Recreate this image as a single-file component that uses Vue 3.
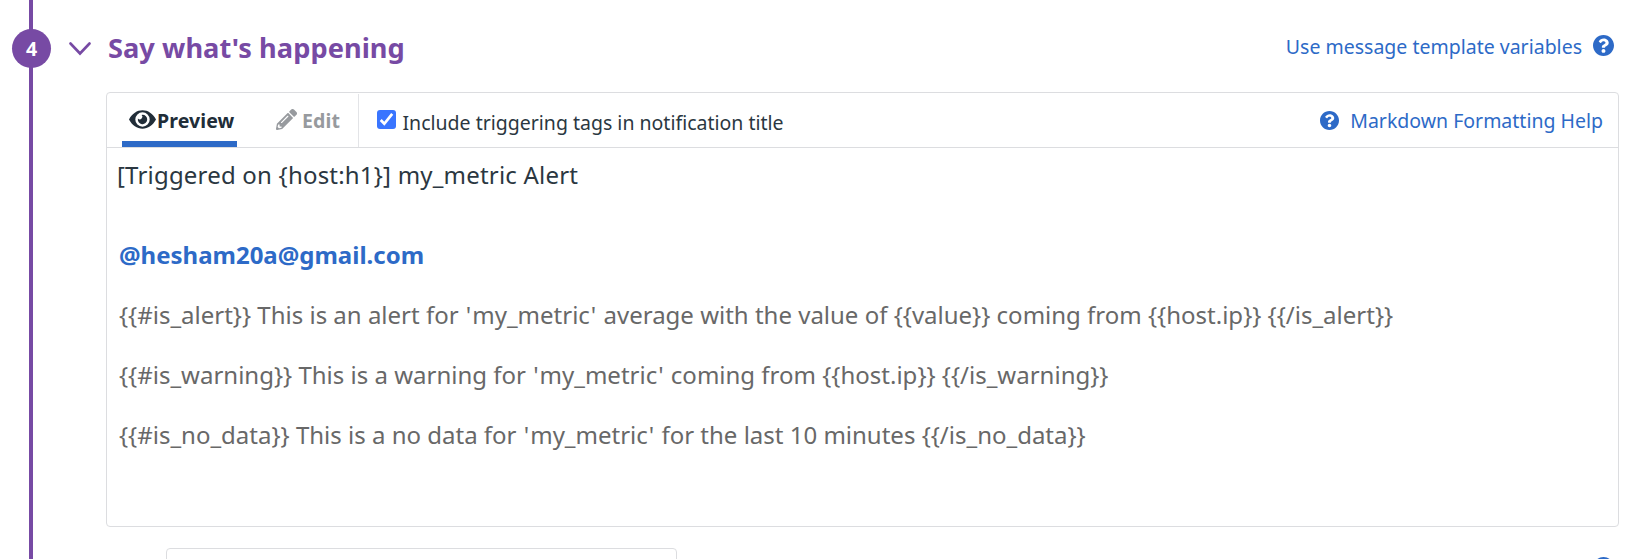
<script setup>
import { ref } from 'vue'

const includeTags = ref(true)
const messages = [
  "{{#is_alert}} This is an alert for 'my_metric' average with the value of {{value}} coming from {{host.ip}} {{/is_alert}}",
  "{{#is_warning}} This is a warning for 'my_metric' coming from {{host.ip}} {{/is_warning}}",
  "{{#is_no_data}} This is a no data for 'my_metric' for the last 10 minutes {{/is_no_data}}",
].map((text) => text.split(/(')/))
const helpPath =
  'M504 256c0 137-111 248-248 248S8 393 8 256 119 8 256 8s248 111 248 248zM262.700 90c-54.500 0-89.300 23-116.500 63.800-3.500 5.300-2.400 12.400 2.700 16.300l34.700 26.300c5.200 3.900 12.600 3 16.700-2.100 17.900-22.700 30.100-35.800 57.300-35.800 20.400 0 45.700 13.100 45.700 33 0 15-12.400 22.700-32.500 34C247.100 238.500 216 254.900 216 296v4c0 6.600 5.400 12 12 12h56c6.600 0 12-5.400 12-12v-1.300c0-28.500 83.200-29.600 83.200-106.700 0-58-60.200-102-116.500-102zM256 338c-25.400 0-46 20.600-46 46s20.600 46 46 46 46-20.600 46-46-20.600-46-46-46z'
</script>

<template>
  <main class="step">
    <aside class="rail"><span class="badge">4</span></aside>
    <section class="content">
      <header class="heading">
        <svg class="chevron" viewBox="0 0 22 14"><path d="M1.500 1.500 11 11.500 20.500 1.500" /></svg>
        <h2><span>Say what's happening</span></h2>
        <a class="vars"><span>Use message template variables</span>
          <svg class="help" viewBox="8 8 496 496"><path :d="helpPath" /></svg>
        </a>
      </header>
      <div class="panel">
        <nav class="toolbar">
          <div class="tab active">
            <svg class="eye" viewBox="0 0 27 19">
              <path fill-rule="evenodd" d="M0 9.500C3.200 3.600 8 .3 13.500.3S23.800 3.600 27 9.500c-3.200 5.900-8 9.200-13.500 9.200S3.200 15.400 0 9.500ZM13.500 2.300a7.200 7.200 0 1 0 0 14.400 7.200 7.200 0 0 0 0-14.400Z" />
              <path d="M13.500 4.800a4.700 4.700 0 1 1-4.600 3.800 2.600 2.600 0 0 0 3.700-3.700Z" />
            </svg><span>Preview</span>
          </div>
          <div class="tab edit">
            <svg class="pencil" viewBox="0 0 512 512"><path d="M498 142l-46 46c-5 5-13 5-17 0L324 77c-5-5-5-12 0-17l46-46c19-19 49-19 68 0l60 60c19 19 19 49 0 68zM284 100L22 362 0 484c-3 16 12 30 28 28l122-22 262-262c5-5 5-13 0-17L301 100c-4-5-12-5-17 0zM124 340c-5-6-5-14 0-20l154-154c6-5 14-5 20 0s5 14 0 20L144 340c-6 5-14 5-20 0zM88 424h48v36l-64 12-32-32 12-64h36v48z" /></svg>
            <span>Edit</span>
          </div>
          <label class="include">
            <input v-model="includeTags" type="checkbox">
            <span class="check"><svg v-if="includeTags" viewBox="0 0 19 19"><path d="M3.700 10 7.300 13.800 15.200 3.800" /></svg></span>
            <span class="include-text">Include triggering tags in notification title</span>
          </label>
          <a class="markdown">
            <svg viewBox="8 8 496 496"><path :d="helpPath" /></svg><span>Markdown Formatting Help</span>
          </a>
        </nav>
        <div class="title"><span>[Triggered on {host:h1}] my_metric Alert</span></div>
        <div class="body">
          <p class="mention"><span>@hesham20a@gmail.com</span></p>
          <p v-for="(parts, i) in messages" :key="i"><span v-for="(part, j) in parts" :key="j" :class="{ quote: j % 2 }">{{ part }}</span></p>
        </div>
      </div>
      <div class="next">
        <div class="field"></div>
        <svg class="help" viewBox="8 8 496 496"><path :d="helpPath" /></svg>
      </div>
    </section>
  </main>
</template>

<style>
html, body { margin: 0; background: #fff; overflow: hidden; }
</style>

<style scoped>
* { box-sizing: border-box; }
.step { display: flex; width: 1629px; height: 559px; overflow: hidden; font-family: "Noto Sans", sans-serif; font-size: 19.5px; color: #2b3741; }
.rail { width: 62px; flex: none; padding: 29px 0 0 12px; background: linear-gradient(#774aa4, #774aa4) 29px 0 / 4px 100% no-repeat; }
.badge { display: block; width: 39px; height: 39px; border-radius: 50%; background: #774aa4; color: #fff; font-weight: 700; font-size: 19.5px; line-height: 39px; text-align: center; }
.content { flex: 1; min-width: 0; }
.heading { display: flex; align-items: flex-start; height: 92px; padding: 0 15px 0 7px; }
.chevron { width: 22px; height: 14px; margin-top: 42px; fill: none; stroke: #774aa4; stroke-width: 2.6; stroke-linecap: round; }
h2 { margin: 28px 0 0 17px; font-size: 27.2px; line-height: 40px; font-weight: 700; color: #774aa4; white-space: nowrap; letter-spacing: .05px; }
a { color: #2d6ac7; white-space: nowrap; }
svg { display: block; flex: none; }
.vars { display: flex; margin: 32px 0 0 auto; line-height: 30px; }
.help { width: 21px; height: 21px; margin: 3px 0 0 11px; fill: #2d6ac7; }
.panel { width: 1513px; height: 435px; margin-left: 44px; border: 1px solid #dcdde0; border-radius: 4px; }
.toolbar { display: flex; height: 55px; border-bottom: 1px solid #dcdde0; }
.tab { display: flex; font-weight: 700; line-height: 56px; white-space: nowrap; letter-spacing: .12px; }
.active { width: 115px; height: 54px; margin-left: 15px; padding-left: 7px; border-bottom: 6px solid #2d6ac7; color: #212d38; }
.eye { width: 27px; height: 19px; margin-top: 17px; fill: #212d38; }
.active span { margin-left: 1px; }
.edit { width: 122px; height: 53px; margin-top: 1px; padding-left: 39px; border-right: 1px solid #e3e4e7; color: #979a9e; line-height: 54px; }
.pencil { width: 21px; height: 21px; margin: 15px 5px 0 0; fill: #979a9e; }
.include { display: flex; margin-left: 18px; line-height: 60px; }
.include input { display: none; }
.check { width: 19px; height: 19px; margin: 17px 6.5px 0 0; border-radius: 3px; background: #3975ff; }
.check path { fill: none; stroke: #fff; stroke-width: 2.700; }
.include-text { white-space: nowrap; }
.markdown { display: flex; margin: 0 15px 0 auto; line-height: 56px; }
.markdown svg { width: 19px; height: 19px; margin: 18px 11px 0 0; fill: #2d6ac7; }
.title { padding: 7px 0 0 10px; height: 77px; font-size: 24px; line-height: 40px; letter-spacing: .2px; }
.body { padding-left: 12px; font-size: 24px; line-height: 60px; color: #686868; white-space: nowrap; }
p { margin: 0; }
.quote { padding: 0 1px; }
.mention { color: #2d6ac7; font-weight: 700; }
.next { display: flex; justify-content: space-between; padding: 21px 15px 0 104px; }
.field { width: 511px; height: 40px; border: 1px solid #dcdde0; border-radius: 4px; }
.next .help { margin-top: 9px; }
</style>
